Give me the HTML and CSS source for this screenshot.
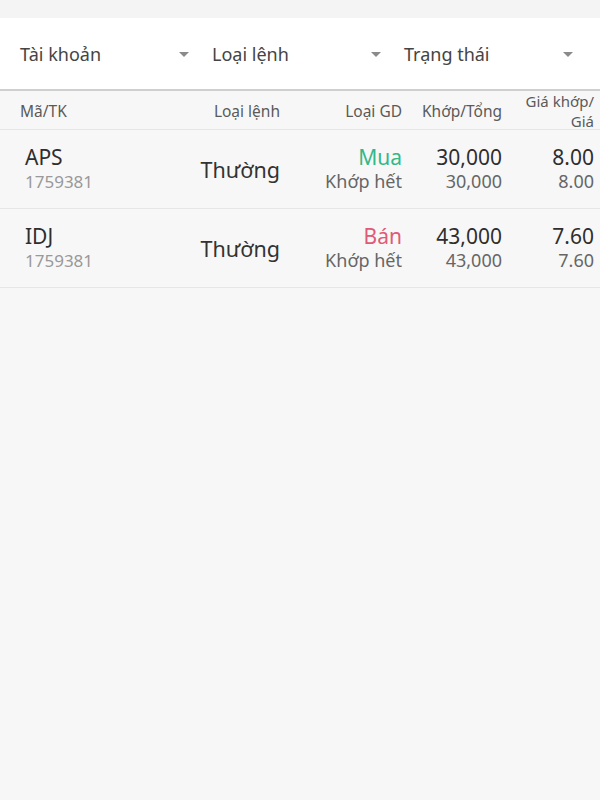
FILE: index.html
```html
<!DOCTYPE html>
<html lang="vi">
<head>
<meta charset="utf-8">
<link rel="stylesheet" href="styles.css">
</head>
<body>
<div class="page">
  <div class="topgap"></div>
  <div class="filters">
    <div class="filter"><span>Tài khoản</span><span class="caret"></span></div>
    <div class="filter"><span>Loại lệnh</span><span class="caret"></span></div>
    <div class="filter"><span>Trạng thái</span><span class="caret"></span></div>
  </div>
  <div class="grid head">
    <div class="c1">Mã/TK</div>
    <div class="r">Loại lệnh</div>
    <div class="r">Loại GD</div>
    <div class="r">Khớp/Tổng</div>
    <div class="r price-head">Giá khớp/<br>Giá</div>
  </div>
  <div class="grid row">
    <div class="c1 stack"><span class="main">APS</span><span class="acct">1759381</span></div>
    <div class="r type">Thường</div>
    <div class="r stack"><span class="main buy">Mua</span><span class="sub">Khớp hết</span></div>
    <div class="r stack"><span class="main">30,000</span><span class="sub">30,000</span></div>
    <div class="r stack"><span class="main">8.00</span><span class="sub">8.00</span></div>
  </div>
  <div class="grid row">
    <div class="c1 stack"><span class="main">IDJ</span><span class="acct">1759381</span></div>
    <div class="r type">Thường</div>
    <div class="r stack"><span class="main sell">Bán</span><span class="sub">Khớp hết</span></div>
    <div class="r stack"><span class="main">43,000</span><span class="sub">43,000</span></div>
    <div class="r stack"><span class="main">7.60</span><span class="sub">7.60</span></div>
  </div>
</div>
</body>
</html>
```
FILE: styles.css
```css
* { box-sizing: border-box; }
html, body { margin: 0; padding: 0; }
body {
  width: 600px;
  height: 800px;
  background: #f7f7f7;
  font-family: "Noto Sans", "Liberation Sans", sans-serif;
  color: #222;
}
.topgap { height: 18px; background: #f4f4f4; }
.filters {
  display: flex;
  height: 73px;
  padding: 0 16px 0 8px;
  background: #fff;
  border-bottom: 2px solid #cfcfcf;
}
.filter {
  flex: 1;
  display: flex;
  align-items: center;
  justify-content: space-between;
  padding: 0 11px 0 12px;
  font-size: 18px;
  color: #444;
}
.caret {
  width: 0; height: 0;
  margin-top: 1px;
  border-left: 5px solid transparent;
  border-right: 5px solid transparent;
  border-top: 5px solid #8a8a8a;
}
.grid {
  display: grid;
  grid-template-columns: 120px 140px 122px 100px 92px;
  padding: 0 6px 0 20px;
  border-bottom: 1px solid #e6e6e6;
}
.head {
  height: 39px;
  align-items: center;
  font-size: 15.5px;
  color: #5a5a5a;
  line-height: 19px;
}
.head .price-head { font-size: 15px; line-height: 20px; }
.r { text-align: right; }
.row {
  height: 79px;
  align-items: center;
}
.stack { display: flex; flex-direction: column; }
.r.stack { align-items: flex-end; }
.c1.stack { padding-left: 5px; }
.main { font-size: 21px; line-height: 25px; color: #2e2e2e; }
.acct { font-size: 17px; line-height: 23px; color: #999; }
.sub { font-size: 18px; line-height: 23px; color: #666; }
.type { font-size: 21.5px; color: #333; padding-top: 1px; }
.buy { color: #33b889; }
.sell { color: #e05a76; }
```
